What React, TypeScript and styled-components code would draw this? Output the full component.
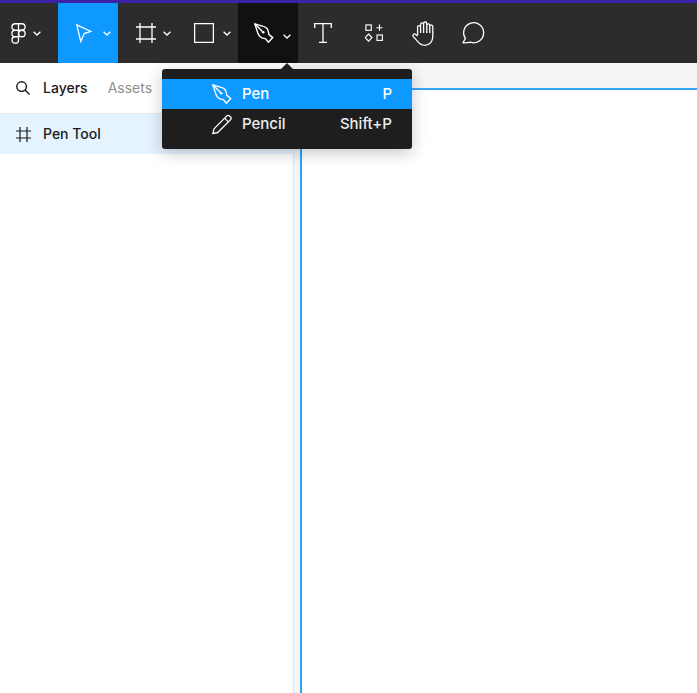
import React from "react";
import styled, { createGlobalStyle } from "styled-components";

const Global = createGlobalStyle`
  html, body { margin: 0; padding: 0; height: 100%; overflow: hidden; background: #fff; }
  body { font-family: Inter, "Liberation Sans", sans-serif; -webkit-font-smoothing: antialiased; }
  #root { height: 100%; }
`;

const Page = styled.div`
  display: flex;
  flex-direction: column;
  height: 693px;
  width: 697px;
  overflow: hidden;
  position: relative;
`;
const Accent = styled.div`
  height: 3px;
  flex: none;
  background: #3b22a6;
`;
const Toolbar = styled.div`
  display: flex;
  flex: none;
  height: 60px;
  background: #2c2c2c;
`;
const Tool = styled.div<{ $w: number; $pl?: number; $gap?: number; $bg?: string }>`
  flex: none;
  width: ${(p) => p.$w}px;
  display: flex;
  align-items: center;
  justify-content: ${(p) => (p.$pl === undefined ? "center" : "flex-start")};
  padding-left: ${(p) => p.$pl ?? 0}px;
  box-sizing: border-box;
  gap: ${(p) => p.$gap ?? 0}px;
  background: ${(p) => p.$bg ?? "transparent"};
`;
const Glyph = styled.svg<{ $ink?: string; $sw?: number }>`
  display: block;
  flex: none;
  fill: none;
  stroke: ${(p) => p.$ink ?? "#fff"};
  stroke-width: ${(p) => p.$sw ?? 1.3};
`;
const Chevron = styled.svg<{ $drop?: number }>`
  display: block;
  flex: none;
  width: 8px;
  height: 5px;
  fill: none;
  stroke: #fff;
  stroke-width: 1.3;
  margin-top: ${(p) => p.$drop ?? 0}px;
`;
const Body = styled.div`
  display: flex;
  flex: 1;
  min-height: 0;
`;
const Sidebar = styled.aside`
  flex: none;
  width: 294px;
  box-sizing: border-box;
  background: #fff;
  border-right: 1px solid #e5e5e5;
`;
const Tabs = styled.div`
  display: flex;
  align-items: center;
  height: 51px;
  box-sizing: border-box;
  padding-left: 16px;
  border-bottom: 1px solid #e6e6e6;
`;
const Tab = styled.span<{ $on?: boolean }>`
  font-size: 14px;
  font-weight: ${(p) => (p.$on ? 500 : 400)};
  line-height: 17px;
  color: ${(p) => (p.$on ? "#1a1a1a" : "#8f8f8f")};
  margin-left: ${(p) => (p.$on ? 13 : 20)}px;
  margin-bottom: 2px;
`;
const LayerRow = styled.div`
  display: flex;
  align-items: center;
  height: 40px;
  padding-left: 16px;
  background: #e5f3ff;
`;
const LayerName = styled.span`
  font-size: 14px;
  font-weight: 500;
  line-height: 17px;
  color: #1a1a1a;
  margin: 0 0 1px 12px;
`;
const Canvas = styled.main`
  flex: 1;
  display: flex;
  padding: 25px 0 0 6px;
  background: #f5f5f5;
`;
const Frame = styled.div`
  flex: 1;
  background: #fff;
  border-top: 2px solid #35a7fb;
  border-left: 2px solid #2ba3fb;
`;
const Menu = styled.div`
  position: absolute;
  left: 162px;
  top: 69px;
  width: 250px;
  height: 80px;
  box-sizing: border-box;
  padding-top: 10px;
  background: #1e1e1e;
  border-radius: 3px;
  box-shadow: 0 4px 16px rgba(0, 0, 0, 0.22);
`;
const Caret = styled.div`
  position: absolute;
  left: 119px;
  top: -6px;
  width: 0;
  height: 0;
  border-left: 6px solid transparent;
  border-right: 6px solid transparent;
  border-bottom: 6px solid #1e1e1e;
`;
const MenuItem = styled.div<{ $on?: boolean }>`
  display: flex;
  align-items: center;
  height: 30px;
  padding: 0 20px 0 50px;
  background: ${(p) => (p.$on ? "#0d99ff" : "transparent")};
  color: ${(p) => (p.$on ? "#fff" : "#ececec")};
  font-size: 15px;
  font-weight: 500;
  line-height: 18px;
`;
const MenuLabel = styled.span`
  margin: 0 0 1px 10px;
  flex: 1;
`;
const Shortcut = styled.span`
  margin-bottom: 1px;
`;

const Chev = ({ drop }: { drop?: number }) => (
  <Chevron viewBox="0 0 8 5" $drop={drop}>
    <path d="M.6.8 4 4 7.4.8" />
  </Chevron>
);

const PenIcon = () => (
  <Glyph width={20} height={20} viewBox="0 0 20 20" $sw={1.4}>
    <path d="M.8.8 10 3.600c2.600.8 4.200 3 4.600 6.200l.2 1.600 4 3.200-4.400 4.600-3-3.600-1.600-.2C7 15 5 13.200 4 10.600L.8.800Z" strokeLinejoin="round" />
    <path d="M.8.8 8.400 8.400" />
    <circle cx="9.200" cy="9.200" r="1.300" fill="#fff" stroke="none" />
  </Glyph>
);

const PencilIcon = () => (
  <Glyph width={20} height={21} viewBox="0 0 20 20">
    <path d="M.8 19.200 2 14.400 14.600 1.600c.9-.9 2.200-.9 3.100 0l.7.7c.9.9.9 2.200 0 3.100L5.700 18 .8 19.200Z" strokeLinejoin="round" />
    <path d="M12.600 3.600 16.400 7.400" />
  </Glyph>
);

export default function App() {
  return (
    <Page>
      <Global />
      <Accent />
      <Toolbar>
        <Tool $w={58} $pl={11} $gap={7}>
          <Glyph width={15} height={21} viewBox="0 0 14 20" $sw={1.25}>
            <path d="M7 .7H3.800a3.100 3.100 0 0 0 0 6.200H7V.7ZM7 .7h3.200a3.100 3.100 0 0 1 0 6.200H7M7 6.900H3.800a3.100 3.100 0 0 0 0 6.200H7V6.900ZM7 13.100H3.800A3.100 3.100 0 1 0 7 16.200v-3.100Z" />
            <circle cx="10.200" cy="10" r="3.100" />
          </Glyph>
          <Chev />
        </Tool>
        <Tool $w={60} $pl={18} $gap={11} $bg="#0d99ff">
          <Glyph width={16} height={19} viewBox="0 0 16 19">
            <path d="M.8.8 15 7.400 8.200 9.600 4.800 17.600.8.800Z" strokeLinejoin="miter" />
          </Glyph>
          <Chev />
        </Tool>
        <Tool $w={60} $pl={18} $gap={7}>
          <Glyph width={20} height={20} viewBox="0 0 20 20">
            <path d="M4 0v20M16 0v20M0 4h20M0 16h20" />
          </Glyph>
          <Chev />
        </Tool>
        <Tool $w={60} $pl={16} $gap={9}>
          <Glyph width={20} height={20} viewBox="0 0 20 20">
            <rect x=".6" y=".6" width="18.800" height="18.800" />
          </Glyph>
          <Chev />
        </Tool>
        <Tool $w={60} $pl={16} $gap={9} $bg="#111">
          <PenIcon />
          <Chev drop={7} />
        </Tool>
        <Tool $w={50}>
          <Glyph width={18} height={20} viewBox="0 0 18 20">
            <path d="M.7 5V.7h16.600V5M9 .7v18.600M5 19.300h8" />
          </Glyph>
        </Tool>
        <Tool $w={50} $pl={17}>
          <Glyph width={18} height={18} viewBox="0 0 18 18" $sw={1.15}>
            <rect x=".9" y=".9" width="5.400" height="5.400" />
            <path d="M14.500.6v6.200M11.400 3.700h6.200" />
            <path d="M3.600 10 7 13.600 3.600 17.200.2 13.600 3.600 10Z" />
            <rect x="12" y="11" width="5.400" height="5.400" />
          </Glyph>
        </Tool>
        <Tool $w={50}>
          <Glyph width={23} height={25} viewBox="0 0 23 25">
            <path d="M5.600 14V6.200c0-2.200 3-2.200 3 0V3.600c0-2.300 3-2.300 3 0V2.800c0-2.400 3.200-2.400 3.200 0v1.800c0-2.200 3-2.200 3 0v.9c0-2 3-2 3 .2v9.600c0 5-3 9-8 9-3.600 0-5.200-1.400-7-3.600L1.400 15.600c-1.400-1.700.8-3.500 2.300-2.200L5.600 15M8.600 6.200V12M11.600 3.600V12M14.800 4.600V12M17.800 5.500V12" strokeLinejoin="round" />
          </Glyph>
        </Tool>
        <Tool $w={50} $pl={14}>
          <Glyph width={23} height={22} viewBox="0 0 23 22">
            <path d="M1 20.800 3.400 16.400A10 10 0 1 1 8.400 20.200C5.800 20.900 3.400 21 1 20.800Z" strokeLinejoin="round" />
          </Glyph>
        </Tool>
      </Toolbar>
      <Body>
        <Sidebar>
          <Tabs>
            <Glyph width={14} height={14} viewBox="0 0 14 14" $ink="#1a1a1a" $sw={1.4}>
              <circle cx="5.600" cy="5.600" r="4.800" />
              <path d="M9 9l4.500 4.500" />
            </Glyph>
            <Tab $on>Layers</Tab>
            <Tab>Assets</Tab>
          </Tabs>
          <LayerRow>
            <Glyph width={15} height={15} viewBox="0 0 15 15" $ink="#1a1a1a" $sw={1.2}>
              <path d="M4 0v15M11 0v15M0 4h15M0 11h15" />
            </Glyph>
            <LayerName>Pen Tool</LayerName>
          </LayerRow>
        </Sidebar>
        <Canvas>
          <Frame />
        </Canvas>
      </Body>
      <Menu>
        <Caret />
        <MenuItem $on>
          <PenIcon />
          <MenuLabel>Pen</MenuLabel>
          <Shortcut>P</Shortcut>
        </MenuItem>
        <MenuItem>
          <PencilIcon />
          <MenuLabel>Pencil</MenuLabel>
          <Shortcut>Shift+P</Shortcut>
        </MenuItem>
      </Menu>
    </Page>
  );
}
